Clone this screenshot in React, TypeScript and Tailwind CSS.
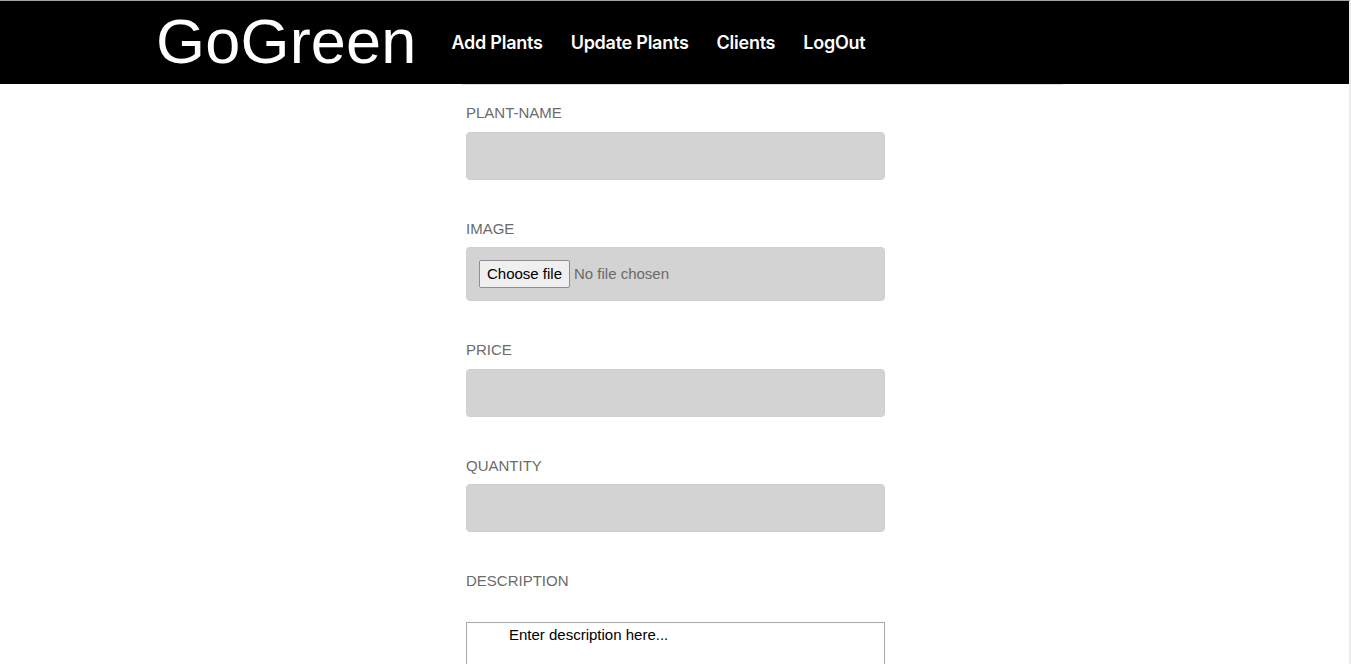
import React from 'react';

const navLinks = ['Add Plants', 'Update Plants', 'Clients', 'LogOut'];

const Label: React.FC<{ text: string }> = ({ text }) => (
  <label className="block h-[17px] text-[15px] leading-[17px] text-[#6b6b6b]">{text}</label>
);

const App: React.FC = () => {
  return (
    <div
      className="min-h-[664px] h-[664px] overflow-hidden bg-white border-t border-[#a3a3a3] border-r-2 border-r-[#ececec]"
      style={{ fontFamily: '"Liberation Sans", Arial, sans-serif' }}
    >
      {/* Header */}
      <header className="h-[83px] bg-black flex items-center pl-[156px]">
        <h1 className="text-[63px] leading-none text-white font-normal tracking-[0.2px] pb-[2px]">GoGreen</h1>
        <nav className="flex items-center gap-[28px] ml-[35px] pb-[1px]">
          {navLinks.map((link) => (
            <a
              key={link}
              href="#"
              className="text-white text-[18px] font-semibold tracking-[-0.25px]"
              style={{ fontFamily: 'Inter, "Open Sans", sans-serif' }}
            >
              {link}
            </a>
          ))}
        </nav>
      </header>

      {/* Form */}
      <div className="ml-[462px] w-[601px] border-t border-[#dedede] pl-[4px] pt-[19px]">
        <form className="flex flex-col">
          <Label text="PLANT-NAME" />
          <input className="mt-[11px] w-[419px] h-[48px] rounded bg-[#d3d3d3] border border-[#cfcfcf]" />

          <div className="mt-[40px]">
            <Label text="IMAGE" />
          </div>
          <div className="mt-[10px] w-[419px] h-[54px] rounded bg-[#d3d3d3] border border-[#cfcfcf] flex items-center pl-[12px] gap-[4px]">
            <button
              type="button"
              className="h-[28px] w-[91px] bg-[#efefef] border border-[#8f8f8f] rounded-[2px] text-[15px] text-black"
            >
              Choose file
            </button>
            <span className="text-[15px] text-[#6a6a6a]">No file chosen</span>
          </div>

          <div className="mt-[40px]">
            <Label text="PRICE" />
          </div>
          <input className="mt-[11px] w-[419px] h-[48px] rounded bg-[#d3d3d3] border border-[#cfcfcf]" />

          <div className="mt-[40px]">
            <Label text="QUANTITY" />
          </div>
          <input className="mt-[10px] w-[419px] h-[48px] rounded bg-[#d3d3d3] border border-[#cfcfcf]" />

          <div className="mt-[40px]">
            <Label text="DESCRIPTION" />
          </div>
          <div className="mt-[33px] w-[419px] h-[120px] border border-[#a9a9a9] pl-[42px] pt-[1px] text-[15px] text-black">
            Enter description here...
          </div>
        </form>
      </div>
    </div>
  );
};

export default App;
